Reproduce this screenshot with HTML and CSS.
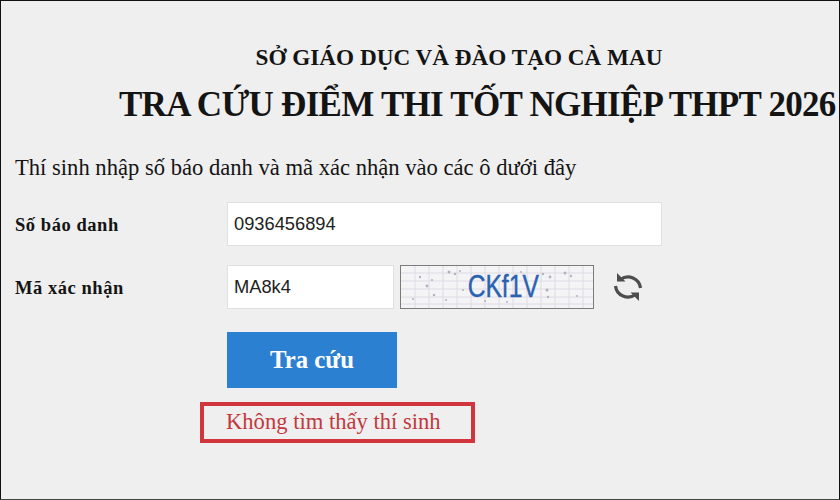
FILE: index.html
```html
<!DOCTYPE html>
<html lang="vi">
<head>
    <meta charset="UTF-8">
    <meta name="viewport" content="width=device-width, initial-scale=1.0">
    <title>Tra cứu điểm thi tốt nghiệp THPT 2026</title>
    <link rel="stylesheet" href="styles.css">
</head>
<body>
<div class="page">
    <!-- Header -->
    <div class="org">SỞ GIÁO DỤC VÀ ĐÀO TẠO CÀ MAU</div>
    <h1 class="title">TRA CỨU ĐIỂM THI TỐT NGHIỆP THPT 2026</h1>
    <p class="intro">Thí sinh nhập số báo danh và mã xác nhận vào các ô dưới đây</p>

    <!-- Form -->
    <form class="lookup">
        <div class="row">
            <label class="label" for="sbd">Số báo danh</label>
            <input class="field field-wide" id="sbd" type="text" value="0936456894">
        </div>
        <div class="row row-code">
            <label class="label" for="code">Mã xác nhận</label>
            <input class="field field-code" id="code" type="text" value="MA8k4">
            <div class="captcha">
                <svg class="captcha-noise" width="192" height="42" viewBox="0 0 192 42">
                    <path d="M0 7H192M0 15H192M0 23H192M0 31H192M0 38H192M14 0V42M28 0V42M42 0V42M56 0V42M70 0V42M84 0V42M98 0V42M112 0V42M126 0V42M140 0V42M154 0V42M168 0V42M182 0V42" stroke="#dedce3" stroke-width="1" fill="none"/>
                    <g fill="#b5b1bf">
                        <circle cx="19" cy="11" r="1.2"/><circle cx="26" cy="20" r="1.4"/><circle cx="31" cy="14" r="1"/>
                        <circle cx="33" cy="29" r="1.2"/><circle cx="48" cy="6" r="1.5"/><circle cx="54" cy="8" r="1.2"/>
                        <circle cx="59" cy="5" r="1"/><circle cx="45" cy="34" r="1"/><circle cx="62" cy="24" r="1"/>
                        <circle cx="12" cy="33" r="1"/><circle cx="142" cy="8" r="1.2"/><circle cx="149" cy="11" r="1.4"/>
                        <circle cx="164" cy="7" r="1.5"/><circle cx="170" cy="10" r="1.2"/><circle cx="146" cy="24" r="1.5"/>
                        <circle cx="147" cy="31" r="1.2"/><circle cx="128" cy="28" r="1"/><circle cx="176" cy="30" r="1"/>
                        <circle cx="106" cy="36" r="1"/><circle cx="84" cy="35" r="1"/><circle cx="120" cy="6" r="1"/>
                    </g>
                </svg>
                <span class="captcha-text">CKf1V</span>
            </div>
            <svg class="refresh" width="32" height="32" viewBox="0 0 32 32" fill="none">
                <path d="M8.500 8.500a12.500 12.500 0 0 1 20 8.500" stroke="#4d4d4d" stroke-width="3.200"/>
                <path d="M3.500 15a12.500 12.500 0 0 0 20 8.500" stroke="#4d4d4d" stroke-width="3.200"/>
                <path d="M5 2v8.500h8.500z" fill="#4d4d4d"/>
                <path d="M27 30v-8.500h-8.500z" fill="#4d4d4d"/>
            </svg>
        </div>
        <button class="submit" type="button">Tra cứu</button>
        <div class="error">Không tìm thấy thí sinh</div>
    </form>
</div>
</body>
</html>
```

FILE: styles.css
```css
* {
    box-sizing: border-box;
}
body {
    margin: 0;
    background-color: #efefef;
    font-family: "Liberation Serif", "Times New Roman", serif;
    color: #141414;
}
.page {
    width: 840px;
    height: 500px;
    overflow: hidden;
    border: 1px solid #111;
    border-bottom: 1px solid #444;
    padding: 43px 0 0 14px;
}
.org {
    width: 888px;
    text-align: center;
    font-size: 23.2px;
    font-weight: bold;
    line-height: 27px;
}
.title {
    margin: 11px 0 0 104px;
    font-size: 35px;
    letter-spacing: -0.72px;
    line-height: 46px;
    white-space: nowrap;
}
.intro {
    margin: 26px 0 0;
    font-size: 22.6px;
    line-height: 27px;
}
.lookup {
    margin-top: 21px;
}
.row {
    display: flex;
    align-items: center;
    height: 44px;
}
.row-code {
    margin-top: 19px;
}
.label {
    width: 212px;
    padding-top: 2px;
    font-size: 18.5px;
    font-weight: bold;
    letter-spacing: 0.55px;
}
.field {
    height: 44px;
    border: 1px solid #e0e0e0;
    background: #fff;
    padding: 0 6px;
    font-family: "Liberation Sans", Arial, sans-serif;
    font-size: 18.3px;
    color: #222;
}
.field-wide {
    width: 435px;
}
.field-code {
    width: 167px;
}
.captcha {
    position: relative;
    width: 194px;
    height: 44px;
    margin-left: 6px;
    border: 1px solid #7b7b7b;
    background: #f4f3f6;
    text-align: center;
}
.captcha-noise {
    position: absolute;
    top: 0;
    left: 0;
}
.captcha-text {
    position: relative;
    left: 6px;
    display: inline-block;
    transform: scaleX(0.77);
    font-family: "Liberation Sans", Arial, sans-serif;
    font-size: 32px;
    line-height: 40px;
    color: #2a62b0;
    -webkit-text-stroke: 0.4px #2a62b0;
}
.refresh {
    margin-left: 18px;
}
.submit {
    display: block;
    width: 170px;
    height: 56px;
    margin: 23px 0 0 212px;
    border: none;
    background-color: #2c80d2;
    color: #fff;
    font-family: "Liberation Serif", "Times New Roman", serif;
    font-size: 24.8px;
    font-weight: bold;
}
.error {
    width: 275px;
    height: 41px;
    margin: 14px 0 0 185px;
    border: 4px solid #d0363c;
    padding-left: 22px;
    color: #c2383c;
    font-size: 22.6px;
    line-height: 31px;
}
```
